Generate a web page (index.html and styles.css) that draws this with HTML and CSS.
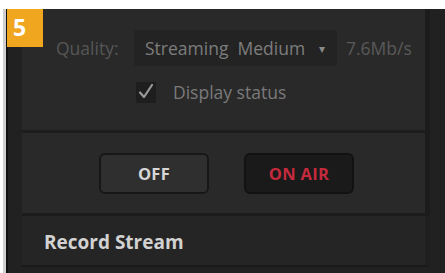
FILE: index.html
```html
<!DOCTYPE html>
<html>
<head>
<meta charset="utf-8">
<link rel="stylesheet" href="styles.css">
</head>
<body>
<div class="panel">
  <div class="badge">5</div>
  <div class="section top">
    <div class="row quality">
      <span class="label">Quality:</span>
      <span class="select">Streaming&nbsp; Medium <span class="caret">&#9662;</span></span>
      <span class="rate">7.6Mb/s</span>
    </div>
    <div class="row check">
      <span class="box"><svg width="18" height="18" viewBox="0 0 18 18"><path d="M3 9.5 L7 14 L15 2" fill="none" stroke="#9a9a9a" stroke-width="2.2" stroke-linecap="round" stroke-linejoin="round"/></svg></span>
      <span class="check-label">Display status</span>
    </div>
  </div>
  <div class="section mid">
    <button class="btn off">OFF</button>
    <button class="btn onair">ON AIR</button>
  </div>
  <div class="section bottom">
    <span class="title">Record Stream</span>
  </div>
</div>
</body>
</html>
```
FILE: styles.css
```css
html, body {
  margin: 0;
  padding: 0;
  background: #ffffff;
  width: 445px;
  height: 273px;
  overflow: hidden;
}
body {
  padding: 9px 0 0 3px;
  box-sizing: border-box;
  font-family: "Open Sans", "Noto Sans", sans-serif;
}
.panel {
  position: relative;
  border-left: 3px solid #cfcfcf;
  background: #212121;
  height: 264px;
  box-sizing: border-box;
  padding: 0 15px 0 16px;
  display: flex;
  flex-direction: column;
  box-shadow: inset 2px 0 0 #111;
}
.badge {
  position: absolute;
  left: 1px;
  top: 0;
  width: 36px;
  height: 38px;
  background: #f0a61f;
  color: #fff;
  font-weight: 700;
  font-size: 23px;
  line-height: 36px;
  padding-left: 6px;
  box-sizing: border-box;
}
.section {
  background: #292929;
  border-right: 5px solid #1c1c1c;
}
.top {
  height: 124px;
  display: flex;
  flex-direction: column;
  padding-top: 21px;
  box-sizing: border-box;
  border-bottom: 3px solid #1d1d1d;
}
.row {
  display: flex;
  align-items: center;
}
.quality {
  height: 36px;
  font-size: 17.5px;
  color: #565656;
}
.label {
  margin-left: 34px;
  width: 78px;
}
.select {
  background: #232323;
  height: 36px;
  width: 203px;
  box-sizing: border-box;
  padding-left: 11px;
  display: flex;
  align-items: center;
  color: #7d7d7d;
  border-radius: 3px;
  white-space: pre;
}
.caret {
  font-size: 12px;
  margin-left: 9px;
  color: #8a8a8a;
}
.rate {
  margin-left: 9px;
  color: #595959;
}
.check {
  margin-top: 15px;
  margin-left: 114px;
  height: 22px;
}
.box {
  width: 20px;
  height: 21px;
  background: #1e1e1e;
  display: flex;
  align-items: center;
  justify-content: center;
}
.check-label {
  margin-left: 17px;
  font-size: 17.5px;
  color: #7a7a7a;
}
.mid {
  height: 83px;
  display: flex;
  align-items: center;
  padding-left: 77px;
  gap: 35px;
  box-sizing: border-box;
  border-bottom: 3px solid #1c1c1c;
}
.btn {
  width: 110px;
  height: 41px;
  border-radius: 6px;
  font-family: "Open Sans", "Noto Sans", sans-serif;
  font-weight: 700;
  font-size: 16.5px;
  letter-spacing: 0.3px;
  padding: 0;
}
.off {
  background: #2f2f2f;
  border: 2px solid #171717;
  color: #d6d6d6;
}
.onair {
  background: #1a1a1a;
  border: 2px solid #121212;
  color: #c42a3c;
}
.bottom {
  height: 51px;
  display: flex;
  align-items: center;
  padding-left: 22px;
  padding-top: 3px;
  box-sizing: border-box;
  background: #252525;
  border-right-color: #1f1f1f;
  border-bottom: 2px solid #1a1a1a;
}
.title {
  font-weight: 700;
  font-size: 19px;
  color: #d2d2d2;
}
```
